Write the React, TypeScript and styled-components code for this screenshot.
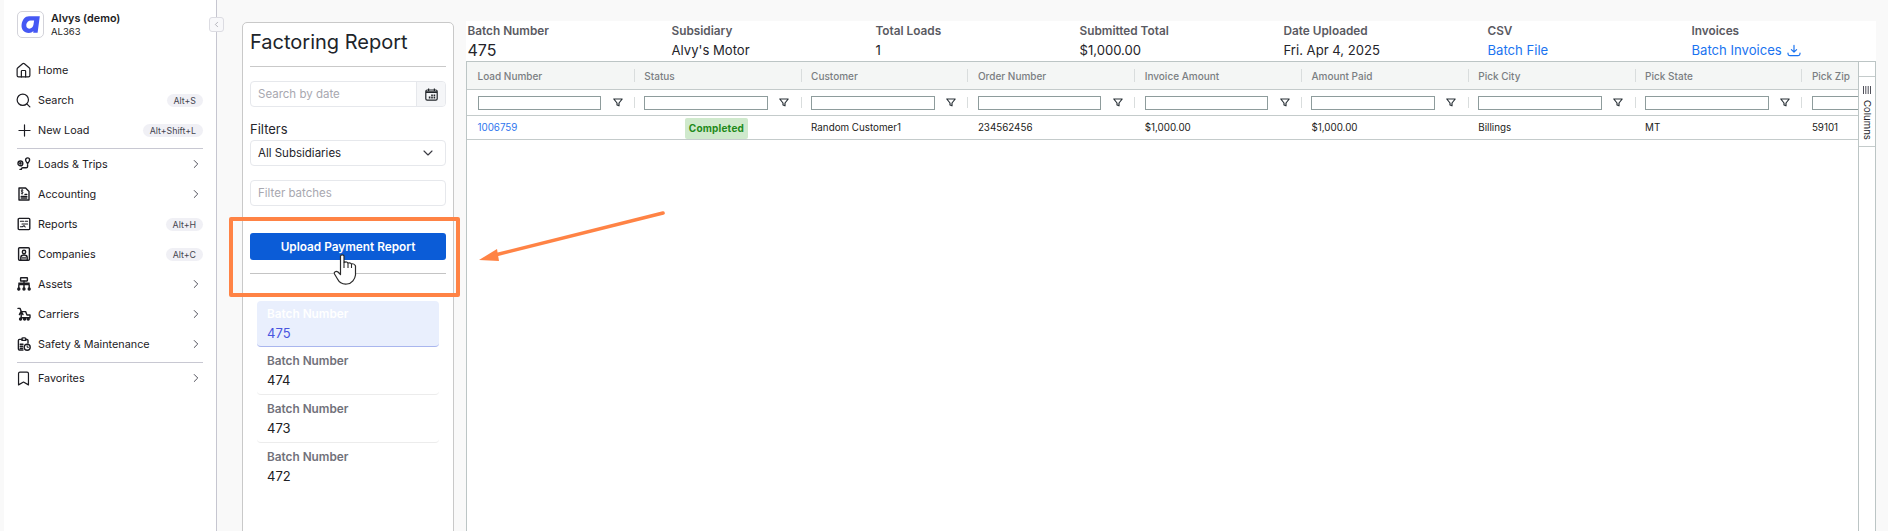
import React from 'react';
import styled, { createGlobalStyle } from 'styled-components';
import {
  Home, Search, Plus, ChevronRight, ChevronLeft, ChevronDown, Bookmark,
} from 'lucide-react';

const GlobalStyle = createGlobalStyle`
  html, body { margin: 0; padding: 0; height: 100%; overflow: hidden; background: #f9f9f9; }
  body { font-family: Inter, "Liberation Sans", sans-serif; color: #1c1c22; }
  #root { height: 100%; }
  * { box-sizing: border-box; }
`;

const Page = styled.div`
  display: flex;
  width: 1888px;
  height: 531px;
  padding-left: 4px;
  position: relative;
  overflow: hidden;
`;

const Sidebar = styled.aside`
  position: relative;
  width: 213px;
  flex: none;
  padding: 11px 13px 0 13px;
  background: #fff;
  border-right: 1px solid #c6c6d0;
`;

const Brand = styled.div`
  display: flex;
  gap: 7px;
  height: 27px;
  margin-bottom: 17px;
`;

const Logo = styled.div`
  width: 27px;
  height: 27px;
  border: 1px solid #d3d3da;
  border-radius: 5px;
  display: flex;
  align-items: center;
  justify-content: center;
`;

const BrandName = styled.div`
  font-size: 10.8px;
  font-weight: 600;
  line-height: 13px;
  margin-top: 1px;
`;

const BrandCode = styled.div`
  font-size: 9.5px;
  line-height: 13px;
`;

const Collapse = styled.button`
  position: absolute;
  top: 17px;
  right: -8px;
  width: 15px;
  height: 15px;
  padding: 0;
  background: #f8f8fa;
  border: 1px solid #dcdce2;
  border-radius: 3px;
  display: flex;
  align-items: center;
  justify-content: center;
  color: #8a8a94;
`;

const NavRow = styled.div`
  display: flex;
  align-items: center;
  height: 30px;
  font-size: 10.8px;
  color: #1c2024;
`;

const NavIcon = styled.span`
  width: 21px;
  flex: none;
  display: flex;
  align-items: center;
  color: #1c1c22;
`;

const PackageIcon = styled.span`
  display: flex;
  margin-left: -2px;
`;

const NavLabel = styled.span`
  flex: 1;
`;

const Shortcut = styled.span`
  height: 13px;
  line-height: 13px;
  padding: 0 7px;
  font-size: 8.8px;
  border-radius: 7px;
  background: #f0f0f5;
  color: #45454f;
`;

const NavChevron = styled.span`
  display: flex;
  color: #50505a;
`;

const NavDivider = styled.hr`
  border: 0;
  border-top: 1px solid #c8c8d2;
  margin: 3px 0 0;
`;

const ReportPanel = styled.section`
  width: 212px;
  flex: none;
  margin: 22px 0 -8px 25px;
  padding: 0 7px;
  background: #fff;
  border: 1px solid #c9c9c9;
  border-radius: 5px;
`;

const Title = styled.h1`
  margin: 0;
  height: 44px;
  padding-top: 4px;
  font-size: 20px;
  font-weight: 400;
  line-height: 30px;
  color: #20242a;
  border-bottom: 1px solid #c9c9c9;
`;

const Field = styled.div`
  display: flex;
  align-items: center;
  height: 26px;
  border: 1px solid #e6e8ec;
  border-radius: 4px;
  padding-left: 7px;
  font-size: 11.5px;
  color: #a8a8b0;
  background: #fff;
  overflow: hidden;
`;

const DateField = styled(Field)`
  margin-top: 14px;
  padding-right: 0;
  justify-content: space-between;
`;

const DateButton = styled.span`
  width: 29px;
  height: 100%;
  flex: none;
  display: flex;
  align-items: center;
  justify-content: center;
  background: #f5f6f8;
  border-left: 1px solid #e6e8ec;
`;

const FiltersLabel = styled.div`
  margin-top: 13px;
  font-size: 13px;
  line-height: 18px;
  color: #26262c;
`;

const SelectField = styled(Field)`
  margin-top: 2px;
  justify-content: space-between;
  padding-right: 9px;
  color: #24242a;
`;

const BatchesField = styled(Field)`
  margin-top: 14px;
`;

const UploadButton = styled.button`
  display: block;
  width: 100%;
  height: 27px;
  margin-top: 27px;
  border: 0;
  border-radius: 3px;
  background: #0b5cd7;
  color: #fff;
  font: 600 11.8px Inter, "Liberation Sans", sans-serif;
`;

const PanelDivider = styled.hr`
  border: 0;
  border-top: 1px solid #c4c4c4;
  margin: 13px 0 27px;
`;

const BatchList = styled.div`
  padding: 0 7px;
`;

const BatchItem = styled.div<{ $active?: boolean }>`
  height: ${p => (p.$active ? '46px' : '48px')};
  padding: ${p => (p.$active ? '6px 10px 0' : '7px 10px 0')};
  border-radius: 4px;
  background: ${p => (p.$active ? '#e9effd' : '#fff')};
  border-bottom: 1px solid ${p => (p.$active ? '#a9b6ee' : '#ececec')};
  &:last-child {
    border-bottom: 0;
  }
`;

const BatchLabel = styled.div<{ $active?: boolean }>`
  font-size: 11.8px;
  font-weight: 600;
  line-height: 14px;
  color: ${p => (p.$active ? '#ffffff' : '#71717a')};
`;

const BatchValue = styled.div<{ $active?: boolean }>`
  margin-top: 4px;
  font-size: 13px;
  line-height: 17px;
  color: ${p => (p.$active ? '#4a55e0' : '#202024')};
`;

const Main = styled.main`
  width: 1410px;
  flex: none;
  margin: 21px 0 0 12px;
  background: #fff;
  display: flex;
  flex-direction: column;
`;

const Summary = styled.div`
  display: grid;
  grid-template-columns: repeat(7, 204px);
  height: 40px;
  padding: 3px 0 0 1.5px;
`;

const SummaryLabel = styled.div`
  font-size: 11.8px;
  font-weight: 600;
  line-height: 15px;
  color: #5a5a62;
`;

const SummaryValue = styled.div<{ $big?: boolean; $link?: boolean }>`
  margin-top: 2px;
  display: flex;
  align-items: center;
  gap: 5px;
  font-size: ${p => (p.$big ? '16px' : '13.1px')};
  line-height: 19px;
  color: ${p => (p.$link ? '#1a73f0' : '#24242a')};
`;

const Grid = styled.div`
  position: relative;
  flex: 1;
  display: flex;
  border: 1px solid #bcc5c5;
  border-bottom: 0;
`;

const Table = styled.div`
  flex: 1;
  min-width: 0;
  overflow: hidden;
`;

const GridRow = styled.div<{ $head?: boolean; $h: number }>`
  display: grid;
  grid-template-columns: repeat(9, 166.8px);
  height: ${p => p.$h}px;
  background: ${p => (p.$head ? '#f4f6f5' : '#fff')};
  border-bottom: 1px solid #c4cbcb;
`;

const HeadCell = styled.div`
  position: relative;
  display: flex;
  align-items: center;
  padding-left: 10.5px;
  font-size: 10px;
  font-weight: 500;
  color: #7a7e82;
  white-space: nowrap;
  &:not(:first-child)::before {
    content: '';
    position: absolute;
    left: 0;
    top: 7px;
    bottom: 7px;
    width: 1px;
    background: #d9dddd;
  }
`;

const FilterCell = styled(HeadCell)`
  gap: 11.5px;
  background: #fff;
`;

const FilterInput = styled.div`
  width: 123.5px;
  height: 14px;
  flex: none;
  background: #fff;
  border: 1px solid #8e9c9c;
`;

const FilterGlyph = styled.span`
  display: flex;
  flex: none;
`;

const DataCell = styled.div`
  display: flex;
  align-items: center;
  padding-left: 10.5px;
  font-size: 9.8px;
  color: #1c1c20;
`;

const LoadLink = styled.span`
  color: #2f76ee;
`;

const StatusBadge = styled.span`
  margin: 1px 0 0 40.5px;
  height: 21px;
  line-height: 21px;
  padding: 0 4px;
  border-radius: 2px;
  background: #cfe9cc;
  color: #1f8a1a;
  font-size: 10px;
  font-weight: 700;
  letter-spacing: 0.2px;
`;

const ToolRail = styled.div`
  width: 17px;
  flex: none;
  border-left: 1px solid #bcc5c5;
  background: #fff;
`;

const ToolTab = styled.div`
  margin-top: 14px;
  height: 71px;
  border-top: 1px solid #c4cbcb;
  border-bottom: 1px solid #c4cbcb;
  display: flex;
  flex-direction: column;
  align-items: center;
  gap: 6px;
  padding-top: 9px;
`;

const ToolTabLabel = styled.span`
  writing-mode: vertical-rl;
  font-size: 9.6px;
  line-height: 14px;
  color: #24242a;
`;

const Highlight = styled.div`
  position: absolute;
  left: 229px;
  top: 217px;
  width: 231px;
  height: 80px;
  border: 4px solid #ff8345;
  border-radius: 2px;
  pointer-events: none;
`;

const Overlay = styled.svg`
  position: absolute;
  left: 0;
  top: 0;
  pointer-events: none;
`;

const LogoMark = () => (
  <svg width="19" height="17" viewBox="0 0 19 17">
    <path
      fillRule="evenodd"
      fill="#4558f4"
      d="M8 0.2H18.8L16.6 16.8H12.2L12.4 15C11.3 16.2 9.8 16.9 7.8 16.9C2.8 16.9 0 13.5 0.6 8.6C1.3 3.6 4 0.2 8 0.2ZM9.8 4.4C7.4 4.4 5.7 6.2 5.3 8.6C5 11 6.2 12.7 8.3 12.7C10.4 12.7 12.1 11.1 12.5 8.6L13.1 4.4Z"
    />
  </svg>
);

const stroke = { fill: 'none', stroke: '#1c1c22', strokeWidth: 1.4, strokeLinecap: 'round', strokeLinejoin: 'round' } as const;

// app specific nav icons, no package has these
const TripsIcon = () => (
  <svg width="14" height="14" viewBox="0 0 14 14" {...stroke}>
    <circle cx="3.4" cy="6.4" r="2.4" />
    <circle cx="3.4" cy="6.4" r="0.6" />
    <path d="M10.6 6.6C9.4 5 8.6 4 8.6 2.9a2 2 0 0 1 4 0C12.6 4 11.8 5 10.6 6.6Z" />
    <path d="M10.6 7.8V9.4a1.4 1.4 0 0 1-1.4 1.4H5.8a1.4 1.4 0 0 0-1.4 1.6H3" />
  </svg>
);

const AccountingIcon = () => (
  <svg width="14" height="14" viewBox="0 0 14 14" {...stroke}>
    <path d="M2 1H8.6L12 4.4V13H2Z" />
    <path d="M4.2 9.4H9.8M4.2 11H9.8M8 7.4H9.8" />
    <path d="M6 3.3C5.4 2.8 4.2 3 4.2 3.9C4.2 5 6 4.6 6 5.7C6 6.6 4.8 6.8 4.2 6.3M5.1 2.4V7.2" strokeWidth="0.9" />
  </svg>
);

const ReportsIcon = () => (
  <svg width="14" height="14" viewBox="0 0 14 14" {...stroke}>
    <rect x="1.2" y="1.4" width="11.6" height="11.2" rx="1" />
    <path d="M3.4 4.2H6.6M8.2 4.2H10.6M5 7H10.6M3.4 9.8H5.4L7 8.6L8.2 10" strokeWidth="1.1" />
  </svg>
);

const CompaniesIcon = () => (
  <svg width="14" height="14" viewBox="0 0 14 14" {...stroke}>
    <rect x="1.6" y="0.8" width="10.8" height="12.4" rx="1" />
    <circle cx="7" cy="5" r="1.7" />
    <path d="M3.8 12.8V10.4C3.8 9 5 8 7 8S10.2 9 10.2 10.4V12.8" />
    <path d="M5 10.4H9M5 11.8H9" strokeWidth="0.8" />
  </svg>
);

const AssetsIcon = () => (
  <svg width="14" height="14" viewBox="0 0 14 14" {...stroke}>
    <rect x="3.6" y="0.8" width="6.8" height="3.2" rx="0.4" />
    <path d="M7 4V11M1.8 11V7.6H12.2V11M1.8 6.2H12.2" />
    <circle cx="1.8" cy="12" r="1" fill="#1c1c22" />
    <circle cx="7" cy="12" r="1" fill="#1c1c22" />
    <circle cx="12.2" cy="12" r="1" fill="#1c1c22" />
  </svg>
);

const CarriersIcon = () => (
  <svg width="14" height="14" viewBox="0 0 14 14" {...stroke}>
    <path d="M1 1.4H3L4.2 4.2V10.6M4.2 4.2L2.4 7.6M4.2 4.2L6 7.6" />
    <path d="M5.2 4.6H8.6L10 8H13V10.8H4.4" />
    <circle cx="3.6" cy="12" r="1" fill="#1c1c22" />
    <circle cx="7.6" cy="12" r="1" fill="#1c1c22" />
    <circle cx="11.2" cy="12" r="1" fill="#1c1c22" />
  </svg>
);

const SafetyIcon = () => (
  <svg width="14" height="14" viewBox="0 0 14 14" {...stroke}>
    <path d="M5 2.4H2.4A1 1 0 0 0 1.4 3.4V12A1 1 0 0 0 2.4 13H6M8.6 2.4H10A1 1 0 0 1 11 3.4V6" />
    <path d="M5 3.4V1.8C5 1.2 5.4 0.9 6 0.9H7.8C8.4 0.9 8.8 1.2 8.8 1.8V3.4Z" />
    <path d="M3.2 7.2H6M3.2 9.2H5.6M3.2 11.2H5.6" />
    <circle cx="10.2" cy="10.2" r="3" />
    <path d="M10.2 8.8V10.3H11.4" strokeWidth="1" />
  </svg>
);

const CalendarIcon = () => (
  <svg width="13" height="13" viewBox="0 0 13 13">
    <rect x="0.8" y="2" width="11.4" height="10.2" rx="1.4" fill="none" stroke="#22262a" strokeWidth="1.2" />
    <path d="M3.6 0.6V3M9.4 0.6V3" stroke="#22262a" strokeWidth="1.2" />
    <path d="M1 3.2H12V5H1Z" fill="#22262a" />
    <path d="M6.2 6.4H7.8V7.9H6.2ZM8.6 6.4H10.2V7.9H8.6ZM3.8 8.6H5.4V10.4H3.8ZM6.2 8.6H7.8V10.4H6.2ZM8.6 8.6H10.2V10.4H8.6Z" fill="#22262a" />
  </svg>
);

const FunnelIcon = () => (
  <svg width="10" height="9" viewBox="0 0 10 9" fill="none" stroke="#2a3238" strokeWidth="1.2" strokeLinejoin="round">
    <path d="M0.8 1H9.2L6 5V7.8L4 7V5Z" />
  </svg>
);

const DownloadIcon = () => (
  <svg width="14" height="13" viewBox="0 0 14 13" fill="none" stroke="#1a73f0" strokeWidth="1.2" strokeLinecap="round" strokeLinejoin="round">
    <path d="M7 1.4V8M4.4 5.6L7 8.2L9.6 5.6" />
    <path d="M1 9V9.8C1 10.8 1.8 11.6 2.8 11.6H11.2C12.2 11.6 13 10.8 13 9.8V9" />
  </svg>
);

const ColumnBars = () => (
  <svg width="8" height="8" viewBox="0 0 8 8" style={{ flex: 'none' }}>
    <path d="M0.5 0V8M2.8 0V8M5.2 0V8M7.5 0V8" stroke="#50505a" strokeWidth="1" />
  </svg>
);

type NavEntry = { label: string; icon: React.ReactNode; key?: string; more?: boolean };

const navTop: NavEntry[] = [
  { label: 'Home', icon: <PackageIcon><Home size={17} strokeWidth={1.7} /></PackageIcon> },
  { label: 'Search', icon: <PackageIcon><Search size={17} strokeWidth={1.7} /></PackageIcon>, key: 'Alt+S' },
  { label: 'New Load', icon: <PackageIcon><Plus size={19} strokeWidth={1.5} /></PackageIcon>, key: 'Alt+Shift+L' },
];

const navMid: NavEntry[] = [
  { label: 'Loads & Trips', icon: <TripsIcon />, more: true },
  { label: 'Accounting', icon: <AccountingIcon />, more: true },
  { label: 'Reports', icon: <ReportsIcon />, key: 'Alt+H' },
  { label: 'Companies', icon: <CompaniesIcon />, key: 'Alt+C' },
  { label: 'Assets', icon: <AssetsIcon />, more: true },
  { label: 'Carriers', icon: <CarriersIcon />, more: true },
  { label: 'Safety & Maintenance', icon: <SafetyIcon />, more: true },
];

const navBottom: NavEntry[] = [
  { label: 'Favorites', icon: <PackageIcon><Bookmark size={17} strokeWidth={1.7} /></PackageIcon>, more: true },
];

const NavItems = ({ items }: { items: NavEntry[] }) => (
  <>
    {items.map(item => (
      <NavRow key={item.label}>
        <NavIcon>{item.icon}</NavIcon>
        <NavLabel>{item.label}</NavLabel>
        {item.key && <Shortcut>{item.key}</Shortcut>}
        {item.more && (
          <NavChevron>
            <ChevronRight size={14} strokeWidth={1.7} />
          </NavChevron>
        )}
      </NavRow>
    ))}
  </>
);

const summary = [
  { label: 'Batch Number', value: '475', big: true },
  { label: 'Subsidiary', value: "Alvy's Motor" },
  { label: 'Total Loads', value: '1' },
  { label: 'Submitted Total', value: '$1,000.00' },
  { label: 'Date Uploaded', value: 'Fri. Apr 4, 2025' },
  { label: 'CSV', value: 'Batch File', link: true },
  { label: 'Invoices', value: 'Batch Invoices', link: true, download: true },
];

const columns = ['Load Number', 'Status', 'Customer', 'Order Number', 'Invoice Amount', 'Amount Paid', 'Pick City', 'Pick State', 'Pick Zip'];

export default function App() {
  return (
    <Page>
      <GlobalStyle />
      <Sidebar>
        <Brand>
          <Logo><LogoMark /></Logo>
          <div>
            <BrandName>Alvys (demo)</BrandName>
            <BrandCode>AL363</BrandCode>
          </div>
        </Brand>
        <Collapse><ChevronLeft size={9} strokeWidth={1.6} /></Collapse>
        <NavItems items={navTop} />
        <NavDivider />
        <NavItems items={navMid} />
        <NavDivider />
        <NavItems items={navBottom} />
      </Sidebar>

      <ReportPanel>
        <Title>Factoring Report</Title>
        <DateField>
          Search by date
          <DateButton><CalendarIcon /></DateButton>
        </DateField>
        <FiltersLabel>Filters</FiltersLabel>
        <SelectField>
          All Subsidiaries
          <ChevronDown size={16} strokeWidth={1.7} color="#3a3a42" />
        </SelectField>
        <BatchesField>Filter batches</BatchesField>
        <UploadButton>Upload Payment Report</UploadButton>
        <PanelDivider />
        <BatchList>
          {['475', '474', '473', '472'].map((n, i) => (
            <BatchItem key={n} $active={i === 0}>
              <BatchLabel $active={i === 0}>Batch Number</BatchLabel>
              <BatchValue $active={i === 0}>{n}</BatchValue>
            </BatchItem>
          ))}
        </BatchList>
      </ReportPanel>

      <Main>
        <Summary>
          {summary.map(s => (
            <div key={s.label}>
              <SummaryLabel>{s.label}</SummaryLabel>
              <SummaryValue $big={s.big} $link={s.link}>
                {s.value}
                {s.download && <DownloadIcon />}
              </SummaryValue>
            </div>
          ))}
        </Summary>
        <Grid>
          <Table>
            <GridRow $head $h={28}>
              {columns.map(c => <HeadCell key={c}>{c}</HeadCell>)}
            </GridRow>
            <GridRow $h={26}>
              {columns.map(c => (
                <FilterCell key={c}>
                  <FilterInput />
                  <FilterGlyph><FunnelIcon /></FilterGlyph>
                </FilterCell>
              ))}
            </GridRow>
            <GridRow $h={24}>
              <DataCell><LoadLink>1006759</LoadLink></DataCell>
              <DataCell><StatusBadge>Completed</StatusBadge></DataCell>
              <DataCell>Random Customer1</DataCell>
              <DataCell>234562456</DataCell>
              <DataCell>$1,000.00</DataCell>
              <DataCell>$1,000.00</DataCell>
              <DataCell>Billings</DataCell>
              <DataCell>MT</DataCell>
              <DataCell>59101</DataCell>
            </GridRow>
          </Table>
          <ToolRail>
            <ToolTab>
              <ColumnBars />
              <ToolTabLabel>Columns</ToolTabLabel>
            </ToolTab>
          </ToolRail>
        </Grid>
      </Main>

      <Highlight />
      <Overlay width="1888" height="531" viewBox="0 0 1888 531">
        <path d="M663 213L495 255" stroke="#ff8345" strokeWidth="3.5" strokeLinecap="round" fill="none" />
        <path d="M479 260L497 249L499 261Z" fill="#ff8345" />
        <path
          d="M340.5 256C340.5 254.5 344 254.5 344 256V262.5C346 261.5 347.5 262 348 263C350 262.5 351 263 351.5 264C353 263.5 355 264.5 355.5 266V275C355 279 352 283.5 347 284C342 284.5 339 282 337.5 279L334.5 274C333.5 272 336 270.5 338 272L340.5 274.5Z"
          fill="#fff"
          stroke="#2a2a2a"
          strokeWidth="1.2"
          strokeLinejoin="round"
        />
        <path d="M344 262.5V268M348 263V268M351.5 264V268" stroke="#2a2a2a" strokeWidth="1.1" fill="none" />
      </Overlay>
    </Page>
  );
}
